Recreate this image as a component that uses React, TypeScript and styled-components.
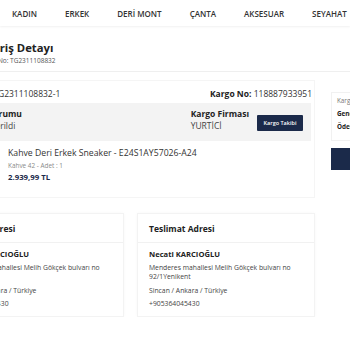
import React from 'react';
import styled, { createGlobalStyle } from 'styled-components';

const GlobalStyle = createGlobalStyle`
  body {
    margin: 0;
    background: #fff;
    font-family: "Open Sans", "Liberation Sans", sans-serif;
    color: #333;
    overflow: hidden;
  }
`;

const Nav = styled.nav`
  height: 26px;
  display: flex;
  align-items: center;
  gap: 28px;
  padding-left: 12px;
  box-shadow: 0 1px 2px rgba(0, 0, 0, 0.06);
  white-space: nowrap;
`;

const NavItem = styled.a`
  font-size: 8px;
  font-weight: 600;
  color: #333;
  text-decoration: none;
`;

const Page = styled.div`
  margin-left: -54px;
  width: 520px;
`;

const Header = styled.header`
  margin-top: 14px;
  padding: 0 0 6px 30px;
  border-bottom: 1px solid #efefef;
`;

const Title = styled.h1`
  margin: 0;
  font-size: 11.3px;
  line-height: 16px;
  font-weight: 700;
  color: #222;
`;

const SubTitle = styled.div`
  font-size: 6.5px;
  line-height: 9px;
  color: #555;
`;

const Content = styled.div`
  display: flex;
  gap: 16px;
  margin-top: 8px;
  align-items: flex-start;
`;

const Main = styled.div`
  width: 369px;
  display: flex;
  flex-direction: column;
  gap: 15px;
`;

const OrderCard = styled.section`
  border: 1px solid #f5f5f5;
  border-left: none;
`;

const OrderTop = styled.div`
  display: flex;
  justify-content: space-between;
  padding: 6px 2px 3px 7px;
  font-size: 8.5px;
  line-height: 13px;
  color: #333;
`;

const Strong = styled.b`
  font-weight: 700;
  color: #222;
`;

const StatusBox = styled.div`
  display: flex;
  align-items: center;
  background: #f3f3f3;
  margin-right: 3px;
  padding: 5px 8px 9px 10px;
`;

const StatusBlock = styled.div<{ $grow?: boolean }>`
  flex: ${(p) => (p.$grow ? 1 : 'none')};
  font-size: 8.5px;
  line-height: 12px;
  color: #444;
`;

const StatusLabel = styled.div`
  font-weight: 700;
  color: #222;
`;

const TrackButton = styled.button`
  margin-left: 8px;
  margin-top: 5px;
  width: 46px;
  height: 16px;
  padding: 0;
  border: none;
  border-radius: 1px;
  background: #1b2a4a;
  color: #fff;
  font-family: inherit;
  font-size: 5.5px;
  font-weight: 600;
`;

const Product = styled.div`
  display: flex;
  gap: 10px;
  padding: 7px 10px 14px;
`;

const Thumb = styled.div`
  width: 42px;
  height: 35px;
  background: #f4f1ee;
`;

const ProductName = styled.div`
  font-size: 8.7px;
  line-height: 11px;
  color: #333;
`;

const ProductMeta = styled.div`
  margin-top: 2px;
  font-size: 6.4px;
  line-height: 9px;
  color: #8a8a8a;
`;

const Price = styled.div`
  margin-top: 2px;
  font-size: 7.8px;
  line-height: 11px;
  font-weight: 700;
  color: #1b2a4a;
`;

const AddressGrid = styled.div`
  display: grid;
  grid-template-columns: 1fr 1fr;
  gap: 13px;
`;

const AddressCard = styled.section`
  border: 1px solid #f3f3f3;
  box-shadow: 0 0 3px rgba(0, 0, 0, 0.03);
`;

const AddressHead = styled.h2`
  margin: 0;
  padding: 8px 11px 7px;
  font-size: 8.5px;
  line-height: 13px;
  font-weight: 700;
  color: #222;
  border-bottom: 1px solid #f1f1f1;
`;

const AddressBody = styled.div`
  padding: 6px 18px 8px 11px;
  font-size: 6.8px;
  line-height: 9px;
  color: #444;
`;

const AddressName = styled.div`
  font-size: 7.6px;
  line-height: 10px;
  font-weight: 700;
  color: #222;
  margin-bottom: 3.5px;
`;

const AddressLine = styled.p<{ $gap?: number }>`
  margin: ${(p) => p.$gap ?? 0}px 0 0;
`;

const Side = styled.aside`
  width: 130px;
  display: flex;
  flex-direction: column;
  gap: 7px;
  margin-top: 12px;
`;

const SummaryCard = styled.div`
  border: 1px solid #f1f1f1;
  padding: 1px 5px 7px;
`;

const SummaryRow = styled.div<{ $bold?: boolean }>`
  display: flex;
  justify-content: space-between;
  font-size: 6.3px;
  line-height: 13px;
  font-weight: ${(p) => (p.$bold ? 700 : 400)};
  color: ${(p) => (p.$bold ? '#222' : '#777')};
`;

const SideButton = styled.button`
  height: 22px;
  border: none;
  background: #1b2a4a;
  color: #fff;
  font-family: inherit;
  font-size: 7px;
  font-weight: 600;
  padding-left: 40px;
  text-align: left;
`;

const navItems = ['KADIN', 'ERKEK', 'DERİ MONT', 'ÇANTA', 'AKSESUAR', 'SEYAHAT'];

const Address: React.FC<{ title: string }> = ({ title }) => (
  <AddressCard>
    <AddressHead>{title}</AddressHead>
    <AddressBody>
      <AddressName>Necati KARCIOĞLU</AddressName>
      <AddressLine>Menderes mahallesi Melih Gökçek bulvarı no 92/1Yenikent</AddressLine>
      <AddressLine $gap={5}>Sincan / Ankara / Türkiye</AddressLine>
      <AddressLine $gap={4}>+905364045430</AddressLine>
    </AddressBody>
  </AddressCard>
);

export default function App() {
  return (
    <>
      <GlobalStyle />
      <Nav>
        {navItems.map((item) => (
          <NavItem key={item}>{item}</NavItem>
        ))}
      </Nav>
      <Page>
        <Header>
          <Title>Sipariş Detayı</Title>
          <SubTitle>Sipariş No: TG2311108832</SubTitle>
        </Header>
        <Content>
          <Main>
            <OrderCard>
              <OrderTop>
                <span>Paket No: TG2311108832-1</span>
                <span>
                  <Strong>Kargo No:</Strong> 118887933951
                </span>
              </OrderTop>
              <StatusBox>
                <StatusBlock $grow>
                  <StatusLabel>Sipariş Durumu</StatusLabel>
                  Kargoya Verildi
                </StatusBlock>
                <StatusBlock>
                  <StatusLabel>Kargo Firması</StatusLabel>
                  YURTİCİ
                </StatusBlock>
                <TrackButton>Kargo Takibi</TrackButton>
              </StatusBox>
              <Product>
                <Thumb />
                <div>
                  <ProductName>Kahve Deri Erkek Sneaker - E24S1AY57026-A24</ProductName>
                  <ProductMeta>Kahve 42 - Adet : 1</ProductMeta>
                  <Price>2.939,99 TL</Price>
                </div>
              </Product>
            </OrderCard>
            <AddressGrid>
              <Address title="Fatura Adresi" />
              <Address title="Teslimat Adresi" />
            </AddressGrid>
          </Main>
          <Side>
            <SummaryCard>
              <SummaryRow>
                <span>Kargo</span>
                <span>0,00 TL</span>
              </SummaryRow>
              <SummaryRow $bold>
                <span>Genel Toplam</span>
                <span>2.939,99 TL</span>
              </SummaryRow>
              <SummaryRow $bold>
                <span>Ödeme</span>
                <span>Kredi Kartı</span>
              </SummaryRow>
            </SummaryCard>
            <SideButton>Fatura</SideButton>
          </Side>
        </Content>
      </Page>
    </>
  );
}
